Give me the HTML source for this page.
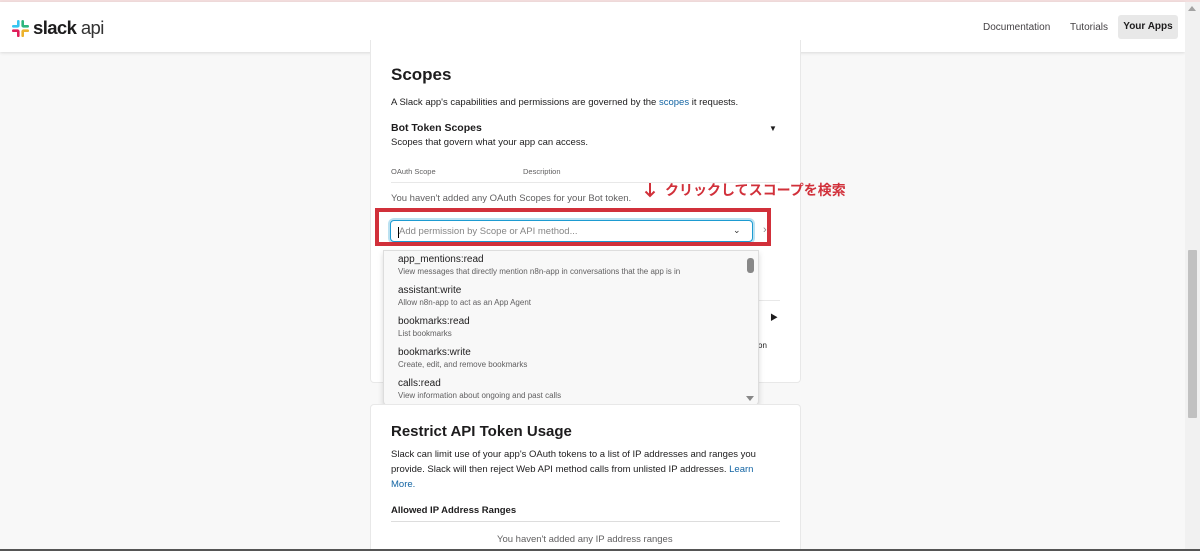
<!DOCTYPE html>
<html style="overflow:hidden;width:1200px;height:551px"><head><meta charset="utf-8"><style>
*{box-sizing:border-box;margin:0;padding:0}
body{width:1200px;height:551px;overflow:hidden;background:#f8f8f8;font-family:"Liberation Sans","Noto Sans CJK JP",sans-serif;color:#1d1c1d;position:relative}
.a{position:absolute;white-space:nowrap}
.card{position:absolute;background:#fff;border:1px solid #e8e8e8;border-radius:4px}
.nm{font-size:10px;color:#1d1c1d}
.ds{font-size:8px;color:#616061}
</style></head><body>
<div class="a" style="left:0;top:0;width:1200px;height:2px;background:#f3dede"></div>
<div class="a" style="left:0;top:2px;width:1185px;height:50px;background:#fff;box-shadow:0 1px 3px rgba(0,0,0,.12)"></div>
<svg class="a" style="left:12px;top:20px" width="17" height="17" viewBox="0 0 17 17">
<rect x="5" y="0" width="2.6" height="7" rx="1.3" fill="#36c5f0"/><rect x="0" y="5" width="7" height="2.6" rx="1.3" fill="#36c5f0"/>
<rect x="9.4" y="0" width="2.6" height="7" rx="1.3" fill="#2eb67d"/><rect x="10" y="5" width="7" height="2.6" rx="1.3" fill="#2eb67d"/>
<rect x="0" y="9.4" width="7" height="2.6" rx="1.3" fill="#e01e5a"/><rect x="5" y="10" width="2.6" height="7" rx="1.3" fill="#e01e5a"/>
<rect x="10" y="9.4" width="7" height="2.6" rx="1.3" fill="#ecb22e"/><rect x="9.4" y="10" width="2.6" height="7" rx="1.3" fill="#ecb22e"/>
</svg>
<div class="a" style="left:33px;top:17px;font-size:18.5px;font-weight:bold;letter-spacing:-0.6px">slack <span style="font-weight:normal;color:#333">api</span></div>
<div class="a" style="left:983px;top:22px;font-size:10px;color:#454245">Documentation</div>
<div class="a" style="left:1070px;top:22px;font-size:10px;color:#454245">Tutorials</div>
<div class="a" style="left:1118px;top:15px;width:60px;height:24px;background:#e8e8e8;border-radius:3px;font-size:10px;font-weight:bold;text-align:center;line-height:24px">Your Apps</div>
<div class="a" style="left:1185px;top:2px;width:15px;height:549px;background:#f1f1f1"></div>
<div class="a" style="left:1188px;top:250px;width:9px;height:168px;background:#c1c1c1;border-radius:1px"></div>
<div class="a" style="left:1188px;top:6px;width:0;height:0;border:4.5px solid transparent;border-bottom:5px solid #a3a3a3;border-top:0"></div>

<div class="card" style="left:370px;top:40px;width:431px;height:343px;border-top:none;border-radius:0 0 4px 4px"></div>
<div class="a" style="left:391px;top:65px;font-size:17px;font-weight:bold">Scopes</div>
<div class="a" style="left:391px;top:97px;font-size:9.5px">A Slack app's capabilities and permissions are governed by the <span style="color:#1264a3">scopes</span> it requests.</div>
<div class="a" style="left:391px;top:122px;font-size:10.5px;font-weight:bold">Bot Token Scopes</div>
<div class="a" style="left:769px;top:124px;font-size:8px">▼</div>
<div class="a" style="left:391px;top:137px;font-size:9.5px">Scopes that govern what your app can access.</div>
<div class="a" style="left:391px;top:167px;font-size:7.5px;color:#616061">OAuth Scope</div>
<div class="a" style="left:523px;top:167px;font-size:7.5px;color:#616061">Description</div>
<div class="a" style="left:391px;top:182px;width:389px;height:1px;background:#e8e8e8"></div>
<div class="a" style="left:391px;top:193px;font-size:9.5px;color:#616061">You haven't added any OAuth Scopes for your Bot token.</div>
<svg class="a" style="left:644px;top:182px" width="12" height="16" viewBox="0 0 12 16"><path d="M6 1V14M1.5 9.5L6 14L10.5 9.5" stroke="#d1303a" stroke-width="2" fill="none"/></svg>
<div class="a" style="left:665px;top:180px;font-size:14px;font-weight:bold;color:#d1303a">クリックしてスコープを検索</div>
<div class="a" style="left:391px;top:300px;width:389px;height:1px;background:#e8e8e8"></div>
<div class="a" style="left:770px;top:312px;font-size:8px">▶</div>
<div class="a" style="left:758px;top:341px;font-size:8px">on</div>
<div class="a" style="left:390px;top:220px;width:363px;height:22px;border:1px solid #1d9bd1;border-radius:4px;background:#fff;box-shadow:0 0 0 2px rgba(29,155,209,.3)"></div>
<div class="a" style="left:398px;top:227px;width:1px;height:11px;background:#000"></div>
<div class="a" style="left:399px;top:226px;font-size:9.5px;color:#868686">Add permission by Scope or API method...</div>
<div class="a" style="left:733px;top:225px;font-size:9px;color:#333">⌄</div>
<div class="a" style="left:763px;top:224px;font-size:11px;color:#888">›</div>
<div class="a" style="left:375px;top:208px;width:396px;height:38px;border:4px solid #d1303a"></div>
<div class="a" style="left:383px;top:250px;width:376px;height:156px;background:#f8f8f8;border:1px solid #ddd;border-radius:0 0 5px 5px;box-shadow:0 3px 6px rgba(0,0,0,.15)"></div>
<div class="a" style="left:747px;top:258px;width:7px;height:15px;background:#888;border-radius:3px"></div>
<div class="a" style="left:746px;top:396px;width:0;height:0;border:4.5px solid transparent;border-top:5px solid #888;border-bottom:0"></div>
<div class="a nm" style="left:398px;top:254px">app_mentions:read</div>
<div class="a ds" style="left:398px;top:267px">View messages that directly mention n8n-app in conversations that the app is in</div>
<div class="a nm" style="left:398px;top:285px">assistant:write</div>
<div class="a ds" style="left:398px;top:298px">Allow n8n-app to act as an App Agent</div>
<div class="a nm" style="left:398px;top:316px">bookmarks:read</div>
<div class="a ds" style="left:398px;top:329px">List bookmarks</div>
<div class="a nm" style="left:398px;top:347px">bookmarks:write</div>
<div class="a ds" style="left:398px;top:360px">Create, edit, and remove bookmarks</div>
<div class="a nm" style="left:398px;top:378px">calls:read</div>
<div class="a ds" style="left:398px;top:391px">View information about ongoing and past calls</div>

<div class="card" style="left:370px;top:404px;width:431px;height:145px;border-bottom:none;border-radius:4px 4px 0 0"></div>
<div class="a" style="left:391px;top:423px;font-size:15px;font-weight:bold">Restrict API Token Usage</div>
<div class="a" style="left:391px;top:447px;font-size:9.5px;line-height:15px;white-space:normal;width:385px">Slack can limit use of your app's OAuth tokens to a list of IP addresses and ranges you provide. Slack will then reject Web API method calls from unlisted IP addresses. <span style="color:#1264a3">Learn More.</span></div>
<div class="a" style="left:391px;top:505px;font-size:9.5px;font-weight:bold">Allowed IP Address Ranges</div>
<div class="a" style="left:391px;top:521px;width:389px;height:1px;background:#ddd"></div>
<div class="a" style="left:497px;top:534px;font-size:9.5px;color:#616061">You haven't added any IP address ranges</div>
<div class="a" style="left:0;top:549px;width:1200px;height:2px;background:#555"></div>
</body></html>
